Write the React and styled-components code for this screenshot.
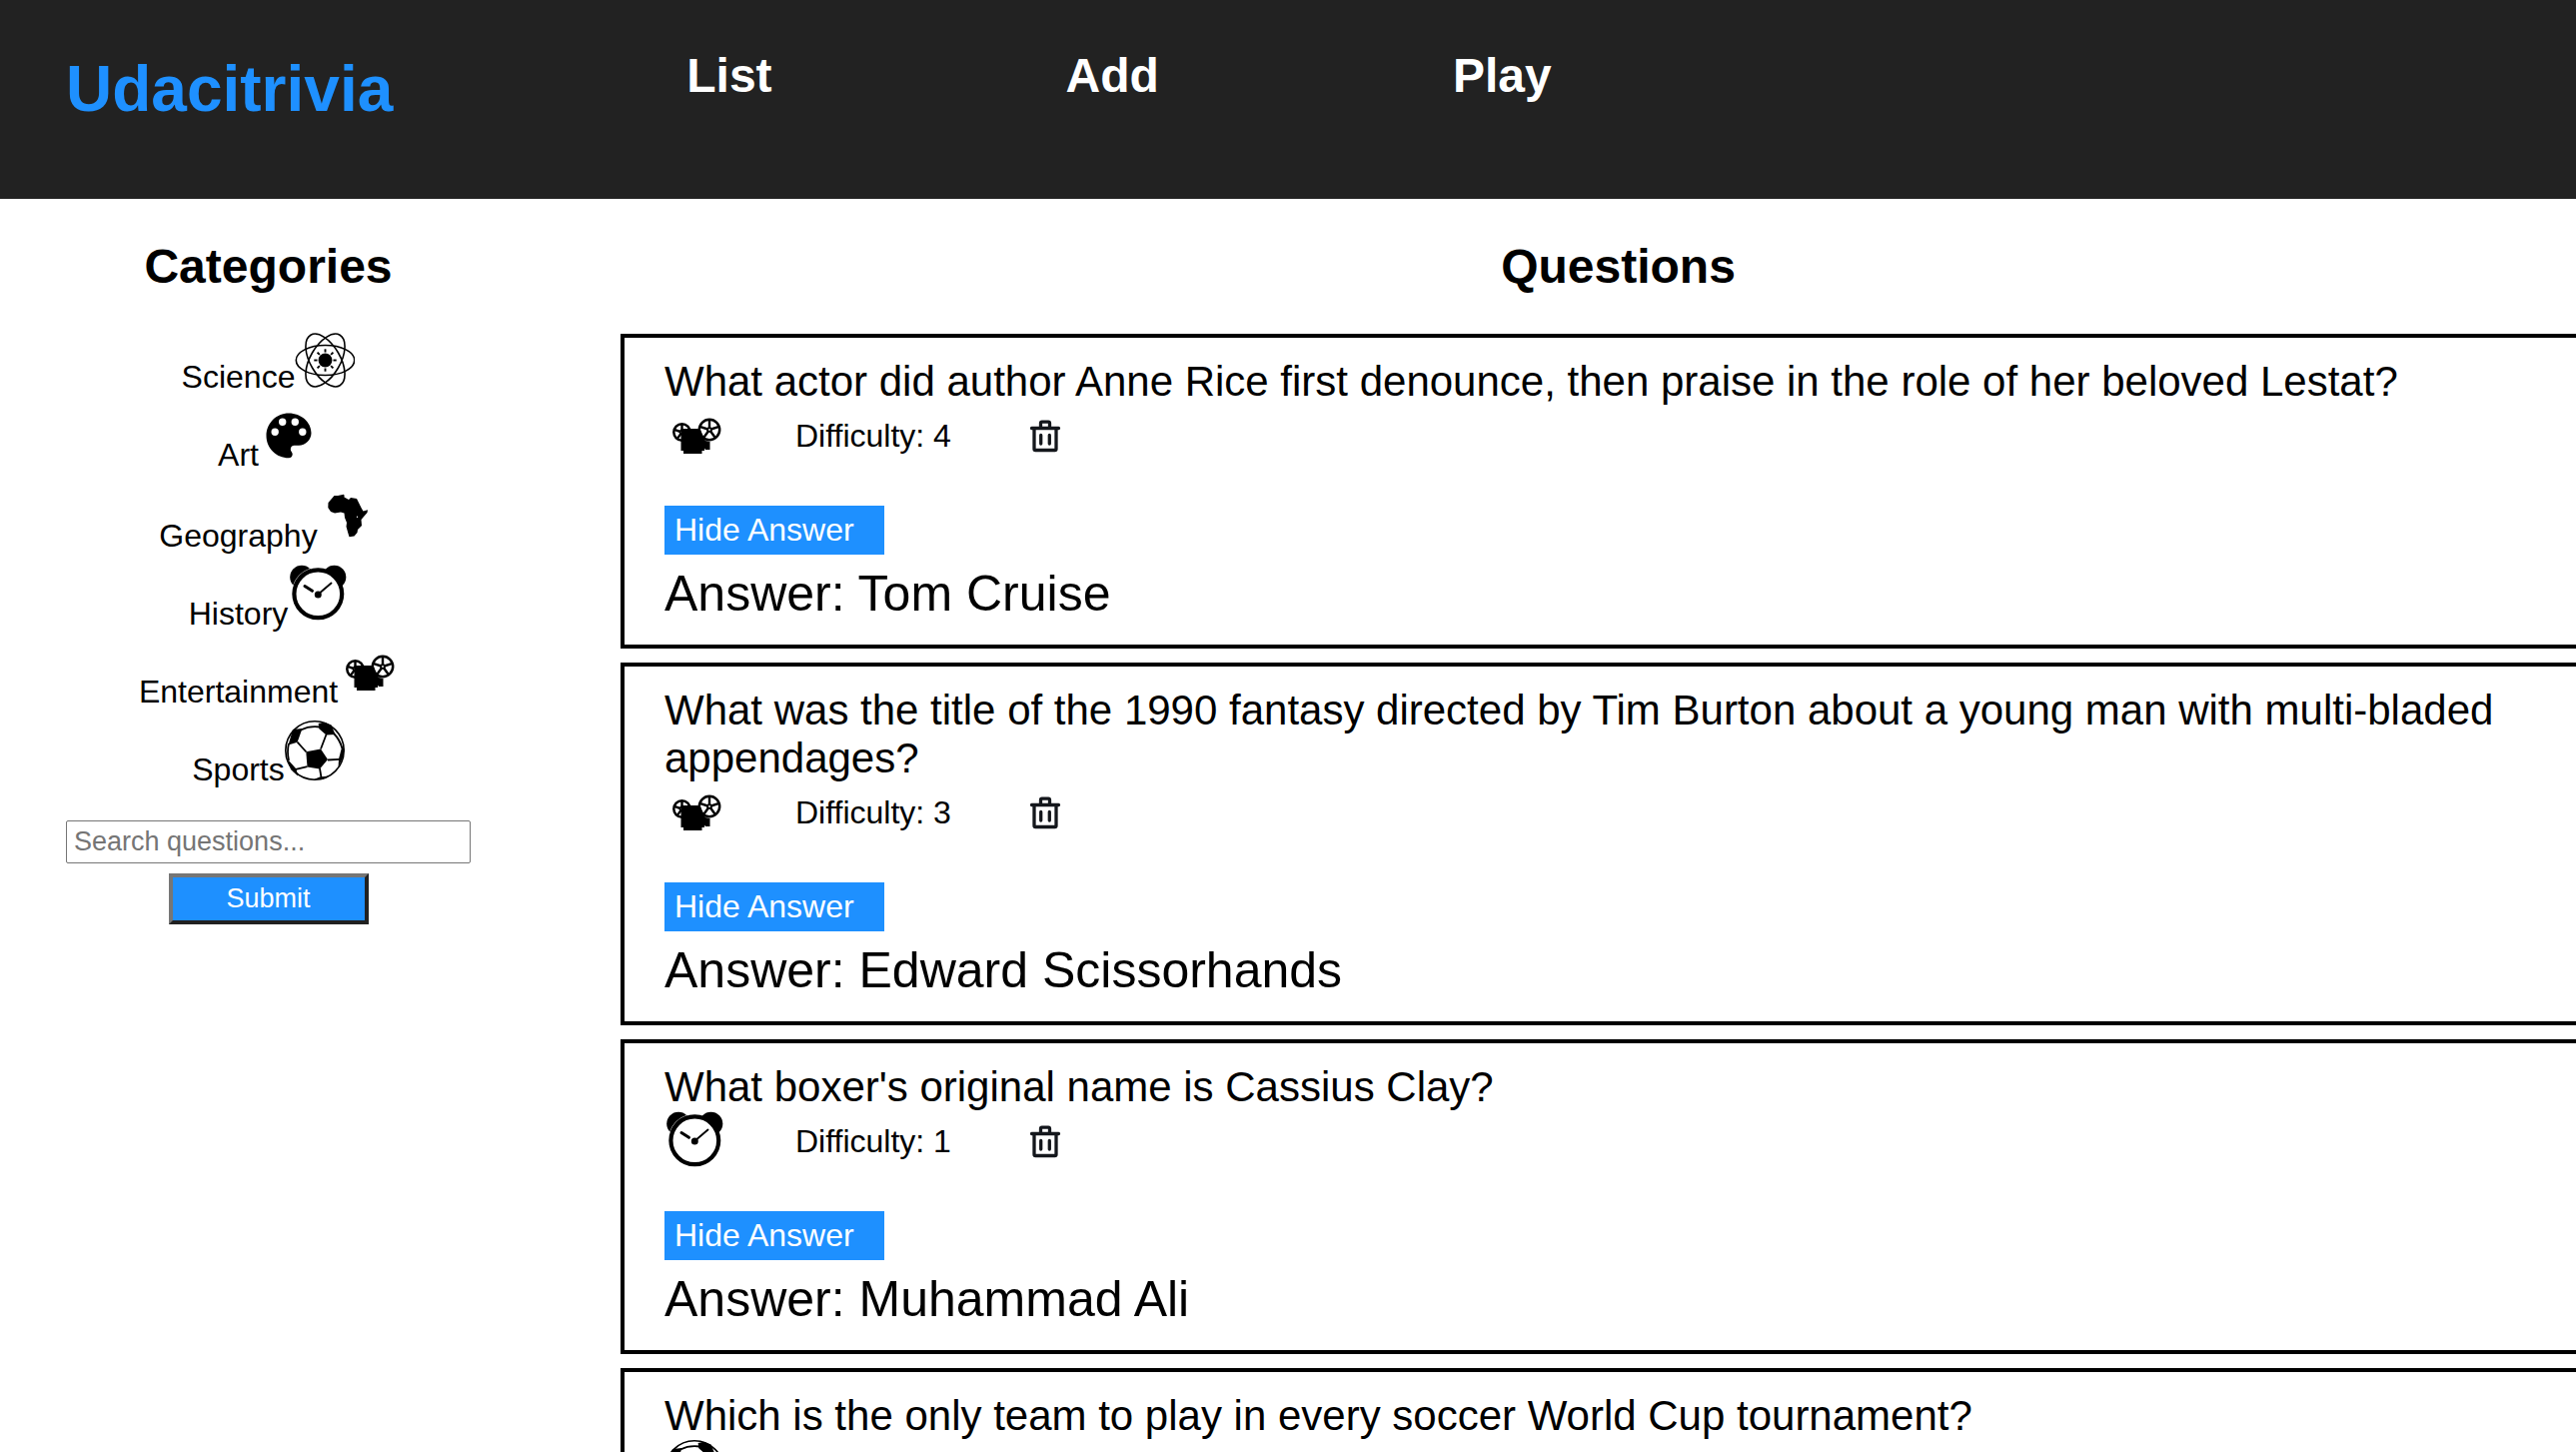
import React from 'react';
import styled, { createGlobalStyle } from 'styled-components';

const GlobalStyle = createGlobalStyle`
  *, *::before, *::after { box-sizing: border-box; }
  body {
    margin: 0;
    background: #fff;
    color: #000;
    font-family: "Liberation Sans", Arial, Helvetica, sans-serif;
    font-size: 32px;
  }
`;

const Page = styled.div`
  height: 100vh;
  overflow-x: hidden;
  overflow-y: auto;
  scrollbar-width: none;
`;

const Header = styled.header`
  display: flex;
  align-items: flex-start;
  gap: 294px;
  height: 199px;
  padding: 49px 66px 0;
  background: #222;
`;

const Title = styled.h1`
  margin: 3px 0 0;
  font-size: 64px;
  line-height: 74px;
  color: dodgerblue;
`;

const Nav = styled.nav`
  display: flex;
  gap: 294px;
`;

const NavLink = styled.a`
  font-size: 48px;
  font-weight: bold;
  line-height: 54px;
  color: #fff;
  text-decoration: none;
`;

const Columns = styled.main`
  display: flex;
  align-items: flex-start;
  padding-left: 66px;
`;

const Sidebar = styled.aside`
  display: flex;
  flex: none;
  flex-direction: column;
  align-items: center;
  width: 405px;
  margin-right: 150px;
`;

const Heading = styled.h2`
  margin: 40px 0;
  font-size: 48px;
  line-height: 55px;
  text-align: center;
`;

const CategoryList = styled.ul`
  display: flex;
  flex-direction: column;
  align-items: center;
  gap: 10px;
  margin: -6px 0 32px;
  padding: 0;
  list-style: none;
`;

const CategoryButton = styled.button`
  display: flex;
  align-items: baseline;
  padding: 0;
  border: 0;
  background: none;
  color: inherit;
  font: inherit;
  line-height: 37px;
  cursor: pointer;
`;

const Icon = styled.svg`
  display: block;
  flex: none;
  width: 60px;
`;

const SearchForm = styled.form`
  display: flex;
  flex-direction: column;
  align-items: center;
  gap: 10px;
  width: 100%;
`;

const SearchInput = styled.input`
  width: 100%;
  height: 43px;
  padding: 0 7px;
  border: 1px solid #767676;
  border-radius: 2px;
  background: #fff;
  font-family: inherit;
  font-size: 27px;
  &::placeholder { color: #757575; }
`;

const SubmitButton = styled.input`
  width: 200px;
  height: 51px;
  padding: 0;
  border: 4px solid;
  border-color: #767676 #212121 #212121 #767676;
  background: dodgerblue;
  color: #fff;
  font-family: inherit;
  font-size: 27px;
`;

const Questions = styled.section`
  flex: 1;
  min-width: 0;
  margin-right: -40px;
`;

const Card = styled.article`
  margin-bottom: 14px;
  padding: 20px 40px 22px;
  border: 4px solid #000;
`;

const QuestionText = styled.p`
  margin: 0;
  font-size: 42px;
  line-height: 48px;
`;

const Status = styled.div`
  display: flex;
  align-items: center;
  gap: 71px;
  height: 60px;
  margin-bottom: 40px;
  line-height: 36px;
`;

const DeleteButton = styled.button`
  display: flex;
  padding: 0;
  border: 0;
  background: none;
  color: #14171c;
  cursor: pointer;
`;

const TrashSvg = styled.svg`
  display: block;
  width: 46px;
  height: 46px;
`;

const ToggleButton = styled.button`
  display: block;
  width: 220px;
  height: 49px;
  padding: 0 10px;
  border: 0;
  background: dodgerblue;
  color: #fff;
  font-family: inherit;
  font-size: 32px;
  text-align: left;
  cursor: pointer;
`;

const Answer = styled.p`
  margin: 11px 0 0;
  font-size: 50px;
  line-height: 57px;
`;

function ScienceIcon() {
  return (
    <Icon viewBox="0 0 60 60" aria-hidden="true">
      <g fill="none" stroke="#000" strokeWidth="1.6">
        <ellipse cx="30.5" cy="32.5" rx="29.2" ry="15" />
        <ellipse cx="30.5" cy="32.5" rx="29.2" ry="15" transform="rotate(60 30.5 32.5)" />
        <ellipse cx="30.5" cy="32.5" rx="29.2" ry="15" transform="rotate(120 30.5 32.5)" />
      </g>
      <circle cx="30.5" cy="32.5" r="6.9" />
      <g stroke="#000" strokeWidth="1.9">
        {[0, 45, 90, 135, 180, 225, 270, 315].map((angle) => (
          <line key={angle} x1="38.5" y1="32.5" x2="41.7" y2="32.5" transform={`rotate(${angle} 30.5 32.5)`} />
        ))}
      </g>
    </Icon>
  );
}

function ArtIcon() {
  return (
    <Icon viewBox="0 0 60 60" aria-hidden="true">
      <path
        fillRule="evenodd"
        d="M30 7.500C17.500 7.500 7.500 17.500 7.500 30S17.500 52.300 30 52.300C32.200 52.300 33.700 50.600 33.700 48.500C33.700 47.500 33.300 46.700 32.700 46C32.100 45.300 31.800 44.500 31.800 43.600C31.800 41.500 33.400 39.800 35.500 39.800H40C46.800 39.800 52.500 34.200 52.500 27.300C52.500 16.400 42.400 7.500 30 7.500ZM16.200 30A3.700 3.700 0 1 1 16.200 22.600A3.700 3.700 0 0 1 16.200 30ZM23.700 20A3.700 3.700 0 1 1 23.700 12.600A3.700 3.700 0 0 1 23.700 20ZM36.300 20A3.700 3.700 0 1 1 36.300 12.600A3.700 3.700 0 0 1 36.300 20ZM43.800 30A3.700 3.700 0 1 1 43.800 22.600A3.700 3.700 0 0 1 43.800 30Z"
      />
    </Icon>
  );
}

function GeographyIcon() {
  return (
    <Icon viewBox="0 0 60 63" aria-hidden="true">
      <path d="M16.500 12L20 12L26 10.800L26.500 11.500L26.500 13.500L31 16L33 14L39 15L41 19L44 25L45.500 27.500L50 26.200L49.500 29L46 33L43.500 36L44 42L40 46L39.500 49L36.500 52.500L31.500 53.200L30.500 50L28.500 43L29 39L27 34L26.500 29.500L23 28.500L17 29.500L13 28L10.300 24L10.500 19Z" />
      <circle cx="39.500" cy="33.300" r="0.700" fill="#fff" />
    </Icon>
  );
}

function HistoryIcon() {
  return (
    <Icon viewBox="0 0 60 60" aria-hidden="true">
      <circle cx="14" cy="12.500" r="11.800" />
      <circle cx="46.500" cy="12.500" r="11.800" />
      <path d="M5.200 21.500A26.600 26.600 0 0 1 22 4.200" fill="none" stroke="#fff" strokeWidth="0.600" />
      <circle cx="30.300" cy="29.300" r="23.900" fill="#fff" stroke="#000" strokeWidth="4.200" />
      <circle cx="30.300" cy="30" r="3.500" />
      <path d="M17 21.500L24.500 26.300" stroke="#000" strokeWidth="3" strokeLinecap="round" />
      <path d="M30 30L43.500 18.500" stroke="#000" strokeWidth="1.900" strokeLinecap="round" />
    </Icon>
  );
}

function Reel({ cx, cy, r }) {
  return (
    <g>
      <circle cx={cx} cy={cy} r={r} fill="#fff" stroke="#000" strokeWidth="2.5" />
      <circle cx={cx} cy={cy} r={2.8} />
      {[0, 72, 144, 216, 288].map((angle) => (
        <line
          key={angle}
          x1={cx}
          y1={cy}
          x2={cx}
          y2={cy - r}
          stroke="#000"
          strokeWidth="2.4"
          transform={`rotate(${angle} ${cx} ${cy})`}
        />
      ))}
      <circle cx={cx} cy={cy} r={0.9} fill="#fff" />
    </g>
  );
}

function EntertainmentIcon() {
  return (
    <Icon viewBox="0 0 60 60" aria-hidden="true">
      <Reel cx={17.5} cy={26.5} r={8.2} />
      <Reel cx={45} cy={24} r={10.2} />
      <path d="M17 23H33L36 24L39 31L41 35L45.500 36V44H41L40 42.500V45H37.500V48H19V45H16.500V23Z" />
    </Icon>
  );
}

function SportsIcon() {
  return (
    <Icon viewBox="0 0 60 60" aria-hidden="true">
      <circle cx="30" cy="30" r="29.200" fill="#fff" stroke="#000" strokeWidth="1.600" />
      <path d="M21.300 31.300L36 28.500L43 39L35 48.500L22.500 46.500Z" />
      <path d="M33.600 3L39.300 1.700L46.500 4.500L50.500 14L41.500 14.500L34.300 8.300Z" />
      <path d="M8 9L17.500 8L12.600 21.700L3.500 24.500Z" />
      <path d="M57 27L59.500 28L58.500 36L53.500 47L54 38.500Z" />
      <path d="M3 39L11.500 48.500L13 55.500L6 49Z" />
      <path d="M35 56.500L44 55.500L38 59L29 59Z" />
      <g fill="none" stroke="#000" strokeWidth="1.800">
        <path d="M12.600 21.700L21.500 31.500M36 28.500L41.500 14M43 39.500L54 38.800M35 48L36.500 57M22.500 46.200L11 48.800M16 9.500Q25 5 35 6.500M49 13Q55 19 57.500 28M4 23Q2 31 4 40" />
      </g>
    </Icon>
  );
}

function TrashIcon() {
  return (
    <TrashSvg viewBox="0 0 46 46" fill="none" stroke="currentColor" strokeWidth="3.3" strokeLinecap="round" aria-hidden="true">
      <path d="M9.500 15.500H36.500M18.500 15V10.500Q18.500 9.200 19.800 9.200H26.200Q27.500 9.200 27.500 10.500V15M12 16V36.200Q12 37.500 13.300 37.500H32.700Q34 37.500 34 36.200V16M18.700 22.500V31M27.300 22.500V31" />
    </TrashSvg>
  );
}

const icons = {
  Science: ScienceIcon,
  Art: ArtIcon,
  Geography: GeographyIcon,
  History: HistoryIcon,
  Entertainment: EntertainmentIcon,
  Sports: SportsIcon,
};

const questions = [
  {
    question: 'What actor did author Anne Rice first denounce, then praise in the role of her beloved Lestat?',
    category: 'Entertainment',
    difficulty: 4,
    answer: 'Tom Cruise',
  },
  {
    question: 'What was the title of the 1990 fantasy directed by Tim Burton about a young man with multi-bladed appendages?',
    category: 'Entertainment',
    difficulty: 3,
    answer: 'Edward Scissorhands',
  },
  {
    question: "What boxer's original name is Cassius Clay?",
    category: 'History',
    difficulty: 1,
    answer: 'Muhammad Ali',
  },
  {
    question: 'Which is the only team to play in every soccer World Cup tournament?',
    category: 'Sports',
    difficulty: 3,
    answer: 'Brazil',
  },
];

function Question({ question, category, difficulty, answer }) {
  const [visible, setVisible] = React.useState(true);
  const CategoryIcon = icons[category];
  return (
    <Card>
      <QuestionText>{question}</QuestionText>
      <Status>
        <CategoryIcon />
        <span>Difficulty: {difficulty}</span>
        <DeleteButton type="button" aria-label="Delete question">
          <TrashIcon />
        </DeleteButton>
      </Status>
      <ToggleButton type="button" onClick={() => setVisible(!visible)}>
        {visible ? 'Hide' : 'Show'} Answer
      </ToggleButton>
      {visible && <Answer>Answer: {answer}</Answer>}
    </Card>
  );
}

export default function App() {
  return (
    <Page>
      <GlobalStyle />
      <Header>
        <Title>Udacitrivia</Title>
        <Nav>
          <NavLink href="#list">List</NavLink>
          <NavLink href="#add">Add</NavLink>
          <NavLink href="#play">Play</NavLink>
        </Nav>
      </Header>
      <Columns>
        <Sidebar>
          <Heading>Categories</Heading>
          <CategoryList>
            {Object.entries(icons).map(([name, CategoryIcon]) => (
              <li key={name}>
                <CategoryButton type="button">
                  {name}
                  <CategoryIcon />
                </CategoryButton>
              </li>
            ))}
          </CategoryList>
          <SearchForm onSubmit={(event) => event.preventDefault()}>
            <SearchInput type="text" aria-label="Search questions" placeholder="Search questions..." />
            <SubmitButton type="submit" value="Submit" />
          </SearchForm>
        </Sidebar>
        <Questions>
          <Heading>Questions</Heading>
          {questions.map((item) => (
            <Question key={item.question} {...item} />
          ))}
        </Questions>
      </Columns>
    </Page>
  );
}
